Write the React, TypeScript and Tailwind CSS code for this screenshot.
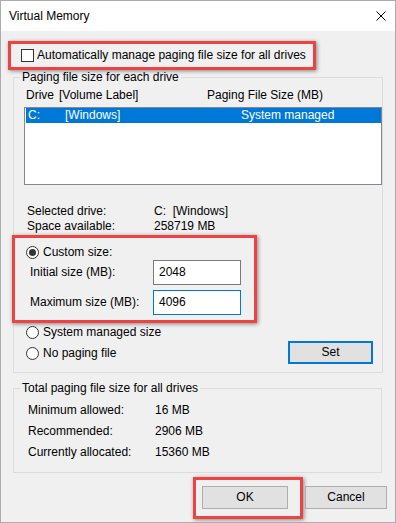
import React from "react"

const red = "border-[3px] border-[#ee4343] shadow-[1px_1px_4px_rgba(0,0,0,0.45)]"

function Radio({ checked, label }: { checked?: boolean; label: string }) {
  return (
    <div className="flex h-[15px] items-center gap-[4px]">
      <span className="flex h-[13px] w-[13px] shrink-0 items-center justify-center rounded-full border border-[#333] bg-white">
        {checked && <span className="h-[7px] w-[7px] rounded-full bg-[#333]" />}
      </span>
      <span>{label}</span>
    </div>
  )
}

function Field({ value, focused }: { value: string; focused?: boolean }) {
  return (
    <div
      className={`flex h-[25px] w-[88px] items-center border bg-white pl-[5px] ${
        focused ? "border-[#0078d7]" : "border-[#7a7a7a]"
      }`}
    >
      {value}
    </div>
  )
}

export default function App() {
  return (
    <div className="h-[523px] w-[396px] overflow-hidden border border-[#acacac] bg-[#f0f0f0] font-['Liberation_Sans',Arial,sans-serif] text-[12px] leading-[15px] text-black">
      <div className="flex h-[30px] items-center justify-between bg-white pl-[8px] pr-[9px]">
        <span>Virtual Memory</span>
        <svg width="10" height="10" viewBox="0 0 10 10" className="shrink-0">
          <path d="M0.5 0.5 L9.5 9.5 M9.5 0.5 L0.5 9.5" stroke="#000" strokeWidth="1" fill="none" />
        </svg>
      </div>

      <div className="pt-[10px]">
        <div className={`ml-[7px] flex h-[29px] w-[308px] items-center gap-[3px] pl-[10px] ${red}`}>
          <span className="h-[13px] w-[13px] shrink-0 border border-[#333] bg-white" />
          <span>Automatically manage paging file size for all drives</span>
        </div>

        <fieldset className="ml-[12px] w-[369px] border border-[#dcdcdc] pb-[8px]">
          <legend className="ml-[6px] px-[2px] leading-[15px]">Paging file size for each drive</legend>
          <div className="mt-[3px] flex">
            <span className="w-[193px] pl-[12px]">
              Drive<span className="ml-[5px]">[Volume Label]</span>
            </span>
            <span>Paging File Size (MB)</span>
          </div>
          <div className="ml-[10px] mt-[4px] h-[78px] w-[358px] border border-[#828790] bg-white">
            <div className="ml-[1px] flex h-[15px] bg-[#0078d7] text-white">
              <span className="w-[39px] pl-[2px]">C:</span>
              <span className="w-[176px]">[Windows]</span>
              <span>System managed</span>
            </div>
          </div>

          <div className="mt-[19px] pl-[13px]">
            <div className="flex">
              <span className="w-[127px]">Selected drive:</span>
              <span>C:&nbsp;&nbsp;[Windows]</span>
            </div>
            <div className="flex">
              <span className="w-[127px]">Space available:</span>
              <span>258719 MB</span>
            </div>
          </div>

          <div className={`-ml-[2px] mt-[1px] h-[88px] w-[245px] pt-[7px] ${red}`}>
            <div className="pl-[11px]">
              <Radio checked label="Custom size:" />
            </div>
            <div className="flex h-[25px] items-center">
              <span className="w-[138px] pl-[15px]">Initial size (MB):</span>
              <Field value="2048" />
            </div>
            <div className="mt-[5px] flex h-[25px] items-center">
              <span className="w-[138px] pl-[15px]">Maximum size (MB):</span>
              <Field value="4096" focused />
            </div>
          </div>

          <div className="mt-[2px] flex h-[39px] pl-[12px] pr-[9px]">
            <div className="flex flex-col gap-[6px]">
              <Radio label="System managed size" />
              <Radio label="No paging file" />
            </div>
            <button className="ml-auto flex h-[23px] w-[85px] items-center justify-center self-end border-2 border-[#0078d7] bg-[#e1e1e1]">
              Set
            </button>
          </div>
        </fieldset>

        <fieldset className="ml-[12px] mt-[8px] w-[369px] border border-[#dcdcdc] pb-[12px]">
          <legend className="ml-[6px] px-[2px] leading-[15px]">Total paging file size for all drives</legend>
          <div className="mt-[7px] flex flex-col gap-[6px] pl-[14px]">
            {[
              ["Minimum allowed:", "16 MB"],
              ["Recommended:", "2906 MB"],
              ["Currently allocated:", "15360 MB"],
            ].map(([k, v]) => (
              <div key={k} className="flex">
                <span className="w-[127px]">{k}</span>
                <span>{v}</span>
              </div>
            ))}
          </div>
        </fieldset>

        <div className="mt-[4px] flex pl-[192px]">
          <div className={`h-[42px] w-[110px] pl-[6px] pt-[6px] ${red}`}>
            <button className="flex h-[23px] w-[86px] items-center justify-center border border-[#adadad] bg-[#e1e1e1]">
              OK
            </button>
          </div>
          <button className="ml-[2px] mt-[9px] flex h-[23px] w-[82px] items-center justify-center border border-[#adadad] bg-[#e1e1e1]">
            Cancel
          </button>
        </div>
      </div>
    </div>
  )
}
